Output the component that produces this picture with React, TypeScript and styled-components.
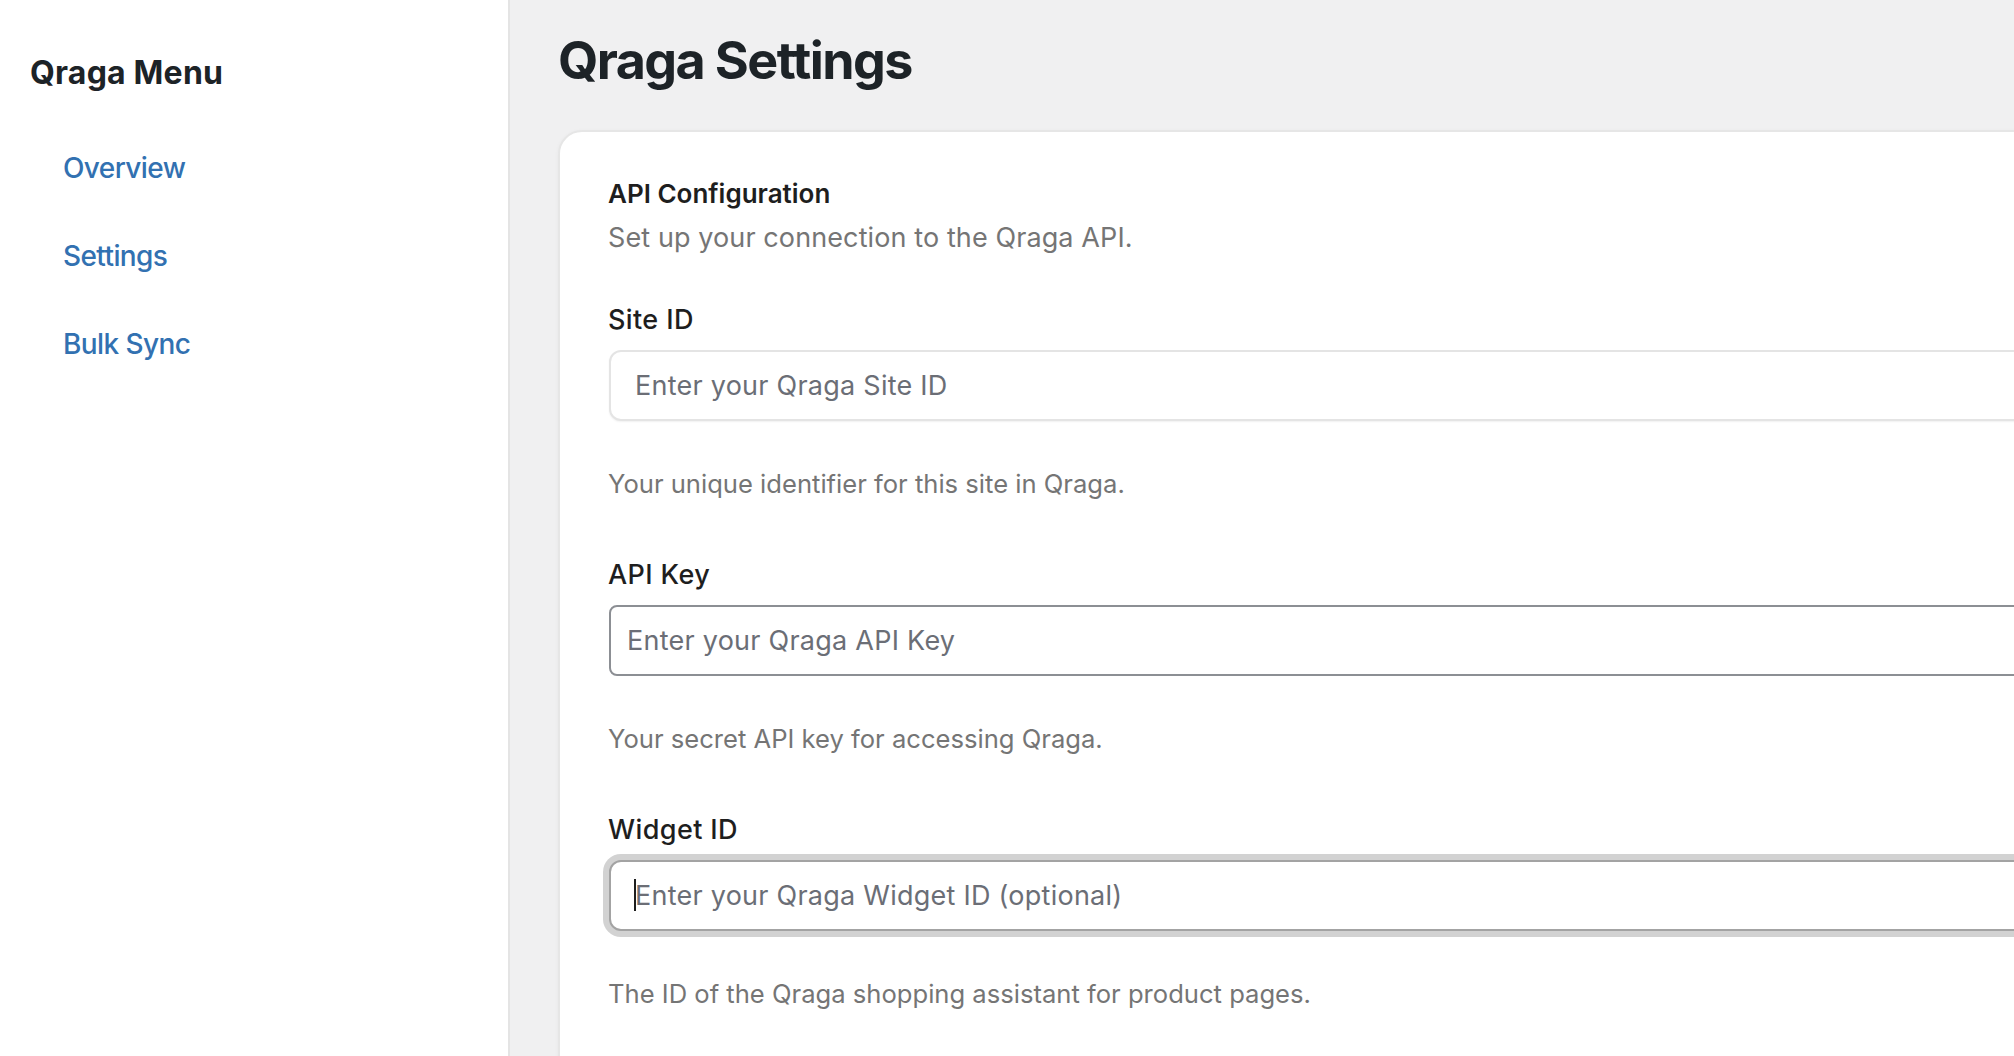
import React from "react";
import styled, { createGlobalStyle } from "styled-components";

const GlobalStyle = createGlobalStyle`
  html, body {
    margin: 0;
    padding: 0;
    height: 100%;
    overflow: hidden;
    background: #f0f0f1;
    font-family: Inter, "Noto Sans", "Liberation Sans", sans-serif;
  }
  * { box-sizing: border-box; }
`;

const Page = styled.div`
  display: flex;
  height: 100vh;
  width: 100vw;
  overflow: hidden;
`;

const Sidebar = styled.aside`
  flex: 0 0 510px;
  background: #ffffff;
  border-right: 2px solid #e4e4e4;
  padding: 53px 0 0 30px;
`;

const MenuTitle = styled.h2`
  margin: 0;
  font-size: 32px;
  line-height: 40px;
  font-weight: 700;
  color: #1d2327;
  letter-spacing: 0.2px;
`;

const Nav = styled.nav`
  display: flex;
  flex-direction: column;
  gap: 52px;
  margin-top: 57px;
  padding-left: 33px;
`;

const NavLink = styled.a`
  font-size: 28px;
  line-height: 36px;
  font-weight: 500;
  color: #3271b1;
  text-decoration: none;
  letter-spacing: -0.6px;
`;

const Main = styled.main`
  flex: 1 1 auto;
  min-width: 0;
  overflow: hidden;
  padding: 30px 0 0 48px;
`;

const Title = styled.h1`
  margin: 0;
  font-size: 52px;
  line-height: 62px;
  font-weight: 700;
  color: #1d2327;
  letter-spacing: -1.6px;
`;

const Card = styled.section`
  margin-top: 38px;
  width: 1700px;
  min-height: 1000px;
  background: #ffffff;
  border: 2px solid #e6e6e6;
  border-radius: 24px;
  padding: 46px 48px;
  box-shadow: 0 1px 4px rgba(0, 0, 0, 0.04);
`;

const CardHeading = styled.h3`
  margin: 0;
  font-size: 26px;
  line-height: 32px;
  font-weight: 600;
  color: #1e1e1e;
`;

const CardDescription = styled.p`
  margin: 10px 0 0;
  font-size: 27px;
  line-height: 36px;
  color: #757575;
  letter-spacing: 0.1px;
`;

const Fields = styled.div`
  display: flex;
  flex-direction: column;
  gap: 55px;
  margin-top: 46px;
`;

const Field = styled.div`
  display: flex;
  flex-direction: column;
`;

const Label = styled.label`
  font-size: 27px;
  line-height: 36px;
  font-weight: 500;
  color: #1e1e1e;
  letter-spacing: 0.4px;
`;

const InputWrap = styled.div`
  position: relative;
  margin-top: 12px;
`;

type Variant = "soft" | "plain" | "focused";

const Input = styled.input<{ $variant: Variant }>`
  display: block;
  width: 100%;
  height: 71px;
  margin: 0 0 0 1px;
  font-family: inherit;
  font-size: 27px;
  letter-spacing: 0.25px;
  color: #1e1e1e;
  background: #ffffff;
  outline: none;
  border-style: solid;
  border-width: 2px;
  border-color: ${(p) =>
    p.$variant === "soft" ? "#e4e4e4" : p.$variant === "plain" ? "#8c8f94" : "#a3a3a3"};
  border-radius: ${(p) => (p.$variant === "plain" ? "8px" : "12px")};
  padding: ${(p) => (p.$variant === "plain" ? "0 16px" : "0 24px")};
  box-shadow: ${(p) =>
    p.$variant === "soft"
      ? "0 1px 2px rgba(0,0,0,0.06)"
      : p.$variant === "focused"
      ? "0 0 0 6px #d2d2d2"
      : "none"};

  &::placeholder {
    color: #6b6e76;
    opacity: 1;
  }
`;

const Caret = styled.span`
  position: absolute;
  left: 26px;
  top: 19px;
  width: 2px;
  height: 32px;
  background: #1e1e1e;
`;

const Help = styled.p`
  margin: 45px 0 0;
  font-size: 25.6px;
  line-height: 36px;
  color: #757575;
`;

const fields: { label: string; placeholder: string; help: string; variant: Variant }[] = [
  {
    label: "Site ID",
    placeholder: "Enter your Qraga Site ID",
    help: "Your unique identifier for this site in Qraga.",
    variant: "soft",
  },
  {
    label: "API Key",
    placeholder: "Enter your Qraga API Key",
    help: "Your secret API key for accessing Qraga.",
    variant: "plain",
  },
  {
    label: "Widget ID",
    placeholder: "Enter your Qraga Widget ID (optional)",
    help: "The ID of the Qraga shopping assistant for product pages.",
    variant: "focused",
  },
];

export default function App() {
  return (
    <>
      <GlobalStyle />
      <Page>
        <Sidebar>
          <MenuTitle>Qraga Menu</MenuTitle>
          <Nav>
            <NavLink href="#">Overview</NavLink>
            <NavLink href="#">Settings</NavLink>
            <NavLink href="#">Bulk Sync</NavLink>
          </Nav>
        </Sidebar>
        <Main>
          <Title>Qraga Settings</Title>
          <Card>
            <CardHeading>API Configuration</CardHeading>
            <CardDescription>Set up your connection to the Qraga API.</CardDescription>
            <Fields>
              {fields.map((f) => (
                <Field key={f.label}>
                  <Label>{f.label}</Label>
                  <InputWrap>
                    <Input $variant={f.variant} placeholder={f.placeholder} />
                    {f.variant === "focused" && <Caret />}
                  </InputWrap>
                  <Help>{f.help}</Help>
                </Field>
              ))}
            </Fields>
          </Card>
        </Main>
      </Page>
    </>
  );
}
